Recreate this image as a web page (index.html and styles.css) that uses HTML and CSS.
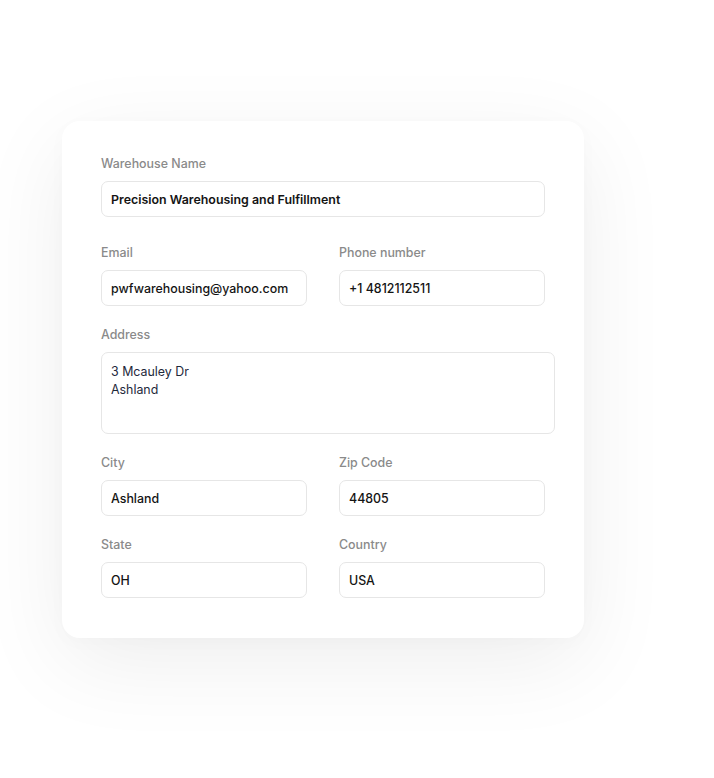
FILE: index.html
```html
<!DOCTYPE html>
<html>
<head>
<meta charset="utf-8">
<link rel="stylesheet" href="styles.css">
</head>
<body>
<div class="stage">
  <form class="card">
    <div class="field field-name">
      <label class="label">Warehouse Name</label>
      <input class="input input-strong" value="Precision Warehousing and Fulfillment">
    </div>
    <div class="grid">
      <div class="field">
        <label class="label">Email</label>
        <input class="input" value="pwfwarehousing@yahoo.com">
      </div>
      <div class="field">
        <label class="label">Phone number</label>
        <input class="input" value="+1 4812112511">
      </div>
      <div class="field span">
        <label class="label">Address</label>
        <textarea class="textarea">3 Mcauley Dr
Ashland</textarea>
      </div>
      <div class="field">
        <label class="label">City</label>
        <input class="input" value="Ashland">
      </div>
      <div class="field">
        <label class="label">Zip Code</label>
        <input class="input" value="44805">
      </div>
      <div class="field">
        <label class="label">State</label>
        <input class="input" value="OH">
      </div>
      <div class="field">
        <label class="label">Country</label>
        <input class="input" value="USA">
      </div>
    </div>
  </form>
</div>
</body>
</html>
```

FILE: styles.css
```css
* { box-sizing: border-box; }
html, body { margin: 0; padding: 0; background: #ffffff; }
body { font-family: Inter, "Noto Sans", sans-serif; -webkit-font-smoothing: antialiased; }
.stage {
  width: 714px;
  height: 778px;
  padding: 121px 0 0 62px;
}
.card {
  width: 522px;
  height: 517px;
  background: #ffffff;
  border-radius: 18px;
  padding: 34px 39px 40px;
  box-shadow: 0 24px 90px rgba(0, 0, 0, 0.07), 0 4px 20px rgba(0, 0, 0, 0.02);
}
.field { display: flex; flex-direction: column; }
.field-name { margin-bottom: 27px; }
.label {
  font-size: 12.4px;
  line-height: 16px;
  padding-top: 1px;
  font-weight: 500;
  color: #8a8a8a;
  margin-bottom: 9px;
}
.grid {
  display: grid;
  grid-template-columns: 206px 206px;
  column-gap: 32px;
  row-gap: 20px;
}
.span { grid-column: 1 / -1; }
.input {
  width: 100%;
  height: 36px;
  border: 1px solid #e6e6e6;
  border-radius: 7px;
  padding: 0 9px;
  font-family: inherit;
  font-size: 12.4px;
  font-weight: 500;
  color: #141414;
  background: #ffffff;
  outline: none;
}
.input-strong { font-weight: 600; }
.textarea {
  width: 454px;
  height: 82px;
  border: 1px solid #e6e6e6;
  border-radius: 7px;
  padding: 10px 9px 8px;
  font-family: inherit;
  font-size: 12.4px;
  line-height: 18px;
  font-weight: 400;
  color: #1e293b;
  background: #ffffff;
  resize: none;
  outline: none;
}
```
